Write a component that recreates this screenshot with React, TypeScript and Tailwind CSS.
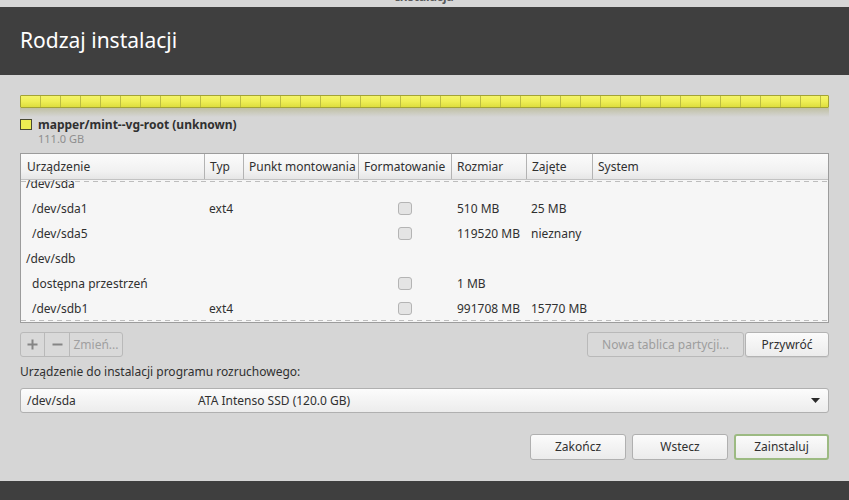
import React from "react";

const cols = "grid grid-cols-[183px_39px_115px_93px_75px_66px_1fr]";

type Row = { dev: string; child: boolean; typ?: string; check?: boolean; size?: string; used?: string };

const rows: Row[] = [
  { dev: "/dev/sda", child: false },
  { dev: "/dev/sda1", child: true, typ: "ext4", check: true, size: "510 MB", used: "25 MB" },
  { dev: "/dev/sda5", child: true, check: true, size: "119520 MB", used: "nieznany" },
  { dev: "/dev/sdb", child: false },
  { dev: "dostępna przestrzeń", child: true, check: true, size: "1 MB" },
  { dev: "/dev/sdb1", child: true, typ: "ext4", check: true, size: "991708 MB", used: "15770 MB" },
];

const headers = ["Urządzenie", "Typ", "Punkt montowania", "Formatowanie", "Rozmiar", "Zajęte", "System"];

function Checkbox() {
  return <div className="w-[14px] h-[13px] rounded-[3px] border border-[#b4b4b4] bg-[#e4e4e4]" />;
}

export default function App() {
  return (
    <div className="w-[849px] h-[500px] flex flex-col bg-[#d6d6d6] text-[#303030] font-['Noto_Sans',sans-serif] text-[12px] overflow-hidden">
      <div className="h-[7px] shrink-0 flex justify-center overflow-hidden">
        <span className="-mt-[11px] text-[12px] leading-[16px] font-bold text-[#5a5a5a]">Instalacja</span>
      </div>
      <div className="h-[68px] shrink-0 bg-[#3f3f3f] flex items-center px-5">
        <h1 className="text-[21px] leading-[28px] text-white font-['Noto_Sans',sans-serif] mt-[-2px]">Rodzaj instalacji</h1>
      </div>

      <div className="flex-1 flex flex-col px-5">
        {/* partition bar */}
        <div className="mt-[20px] h-[13px] rounded-[1px] border border-[#a3a334] bg-[repeating-linear-gradient(90deg,transparent_0_19px,#bdbd40_19px_20px),linear-gradient(180deg,#f4f46a_0%,#eeee55_50%,#dede3e_100%)]" />
        <div className="h-[10px] bg-[linear-gradient(180deg,rgba(150,150,70,0.35)_0%,rgba(214,214,214,0)_90%)]" />

        {/* legend */}
        <div className="flex items-start gap-[6px]">
          <div className="mt-[1px] w-[12px] h-[11px] border border-[#4a4a30] bg-[#eded52]" />
          <div className="flex flex-col">
            <span className="font-bold text-[12px] leading-[14px] text-[#303030]">mapper/mint--vg-root (unknown)</span>
            <span className="text-[11px] leading-[14px] text-[#8e8e8e]">111.0 GB</span>
          </div>
        </div>

        {/* table */}
        <div className="mt-[7px] h-[170px] border border-[#9c9c9c] bg-[#f6f6f6] flex flex-col overflow-hidden">
          <div className={`${cols} h-[26px] shrink-0 border-b border-[#c2c2c2] bg-[linear-gradient(180deg,#fbfbfb_0%,#f1f1f1_70%,#e6e6e6_100%)]`}>
            {headers.map((h, i) => (
              <div
                key={h}
                className={`flex items-center text-[12px] whitespace-nowrap overflow-hidden ${i === 0 ? "pl-[6px]" : "pl-[5px] border-l border-[#b3b3b3]"}`}
              >
                {h}
              </div>
            ))}
          </div>
          <div className="relative flex-1 overflow-hidden">
            <div className="-mt-[9px] flex flex-col">
              {rows.map((r, i) => (
                <div key={i} className={`${cols} h-[25px] items-center`}>
                  <div className={r.child ? "pl-[11px]" : "pl-[5px]"}>{r.dev}</div>
                  <div className="pl-[5px]">{r.typ ?? ""}</div>
                  <div />
                  <div className="flex justify-center">{r.check ? <Checkbox /> : null}</div>
                  <div className="pl-[6px] whitespace-nowrap">{r.size ?? ""}</div>
                  <div className="pl-[5px] whitespace-nowrap">{r.used ?? ""}</div>
                  <div />
                </div>
              ))}
            </div>
            <div className="absolute left-0 right-0 top-[1px] h-px bg-[repeating-linear-gradient(90deg,#bdbdbd_0_5px,transparent_5px_9px)]" />
            <div className="absolute left-0 right-0 bottom-[1px] h-px bg-[repeating-linear-gradient(90deg,#bdbdbd_0_5px,transparent_5px_9px)]" />
          </div>
        </div>

        {/* buttons row */}
        <div className="mt-[9px] h-[25px] flex">
          <div className="flex h-full rounded-[3px] border border-[#b9b9b9] bg-[#d9d9d9]">
            <div className="w-[24px] flex items-center justify-center border-r border-[#b9b9b9]">
              <svg width="11" height="11" viewBox="0 0 11 11">
                <path d="M5.5 0.5 V10.5 M0.5 5.5 H10.5" stroke="#858585" strokeWidth="2" />
              </svg>
            </div>
            <div className="w-[25px] flex items-center justify-center border-r border-[#b9b9b9]">
              <svg width="11" height="11" viewBox="0 0 11 11">
                <path d="M0.5 5.5 H10.5" stroke="#858585" strokeWidth="2" />
              </svg>
            </div>
            <div className="w-[52px] flex items-center justify-center text-[#a0a0a0]">Zmień...</div>
          </div>
          <div className="ml-auto flex h-full gap-px">
            <div className="w-[157px] h-full rounded-[3px] border border-[#b9b9b9] bg-[#d9d9d9] flex items-center justify-center text-[#9d9d9d]">
              Nowa tablica partycji...
            </div>
            <div className="w-[84px] h-full rounded-[3px] border border-[#b3b3b3] bg-[linear-gradient(180deg,#fbfbfb_0%,#ececec_100%)] flex items-center justify-center text-[#303030] shadow-[0_1px_0_rgba(0,0,0,0.05)]">
              Przywróć
            </div>
          </div>
        </div>

        {/* boot loader */}
        <div className="mt-[7px] leading-[16px]">Urządzenie do instalacji programu rozruchowego:</div>
        <div className="mt-[8px] h-[25px] rounded-[3px] border border-[#b0b0b0] bg-[linear-gradient(180deg,#fcfcfc_0%,#ececec_100%)] flex items-center">
          <span className="pl-[6px] w-[177px]">/dev/sda</span>
          <span>ATA Intenso SSD (120.0 GB)</span>
          <svg className="ml-auto mr-[8px]" width="9" height="5" viewBox="0 0 9 5">
            <path d="M0 0 H9 L4.5 5 Z" fill="#2a2a2a" />
          </svg>
        </div>

        {/* bottom buttons */}
        <div className="mt-[21px] flex justify-end gap-[6px]">
          <div className="w-[96px] h-[26px] rounded-[3px] border border-[#b0b0b0] bg-[linear-gradient(180deg,#fbfbfb_0%,#ebebeb_100%)] flex items-center justify-center">
            Zakończ
          </div>
          <div className="w-[96px] h-[26px] rounded-[3px] border border-[#b0b0b0] bg-[linear-gradient(180deg,#fbfbfb_0%,#ebebeb_100%)] flex items-center justify-center">
            Wstecz
          </div>
          <div className="w-[95px] h-[26px] rounded-[3px] border-2 border-[#9cba82] bg-[linear-gradient(180deg,#fbfbfb_0%,#ebebeb_100%)] flex items-center justify-center">
            Zainstaluj
          </div>
        </div>
      </div>

      <div className="h-[19px] shrink-0 bg-[#3f3f3f]" />
    </div>
  );
}
